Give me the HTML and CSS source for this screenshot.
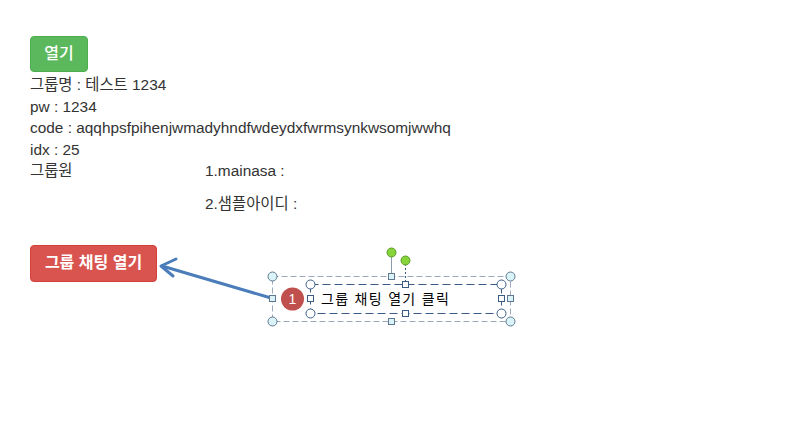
FILE: index.html
```html
<!DOCTYPE html>
<html lang="ko">
<head>
<meta charset="utf-8">
<link rel="stylesheet" href="styles.css">
</head>
<body>
<div class="page">
  <button class="btn btn-green">열기</button>
  <div class="info">
    <div>그룹명 : 테스트 1234</div>
    <div>pw : 1234</div>
    <div>code : aqqhpsfpihenjwmadyhndfwdeydxfwrmsynkwsomjwwhq</div>
    <div>idx : 25</div>
  </div>
  <div class="members">
    <div class="label">그룹원</div>
    <div class="list">
      <div class="member">1.mainasa :</div>
      <div class="member">2.샘플아이디 :</div>
    </div>
  </div>
  <button class="btn btn-red">그룹 채팅 열기</button>

  <svg class="overlay" width="797" height="429" viewBox="0 0 797 429">
    <g fill="none" stroke="#4a7dba" stroke-width="3" stroke-linecap="round" stroke-linejoin="round">
      <line x1="271" y1="298" x2="162" y2="266"/>
      <polyline points="176,259 161,266 173,276"/>
    </g>
    <g fill="none" stroke="#9aaabc" stroke-width="1" stroke-dasharray="6,3">
      <rect x="272.5" y="276.5" width="238" height="45"/>
    </g>
    <g fill="none" stroke="#3a5c85" stroke-width="1" stroke-dasharray="8,4">
      <rect x="310.5" y="284.5" width="191" height="29"/>
    </g>
    <g stroke="#8d9aa8" stroke-width="1">
      <line x1="391.5" y1="256" x2="391.5" y2="273"/>
    </g>
    <g stroke="#3a5c85" stroke-width="1" stroke-dasharray="2,2">
      <line x1="405.5" y1="264" x2="405.5" y2="281"/>
    </g>
    <g fill="#daf3f8" stroke="#60788f" stroke-width="1">
      <circle cx="272.5" cy="276.5" r="4.5"/>
      <circle cx="510.5" cy="276.5" r="4.5"/>
      <circle cx="272.5" cy="321.5" r="4.5"/>
      <circle cx="510.5" cy="321.5" r="4.5"/>
      <rect x="388.5" y="273.5" width="6" height="6"/>
      <rect x="388.5" y="318.5" width="6" height="6"/>
      <rect x="269.5" y="295.5" width="6" height="6"/>
      <rect x="507.5" y="295.5" width="6" height="6"/>
    </g>
    <g fill="#ffffff" stroke="#3a5c85" stroke-width="1">
      <circle cx="310.5" cy="284.5" r="4.5"/>
      <circle cx="501.5" cy="284.5" r="4.5"/>
      <circle cx="310.5" cy="313.5" r="4.5"/>
      <circle cx="501.5" cy="313.5" r="4.5"/>
      <rect x="402.5" y="281.5" width="6" height="6"/>
      <rect x="402.5" y="310.5" width="6" height="6"/>
      <rect x="307.5" y="295.5" width="6" height="6"/>
      <rect x="498.5" y="295.5" width="6" height="6"/>
    </g>
    <g fill="#86d43a" stroke="#5a9a2a" stroke-width="1">
      <circle cx="391.5" cy="252.5" r="4.5"/>
      <circle cx="405.5" cy="260.5" r="4.5"/>
    </g>
    <circle cx="292.5" cy="299" r="11.5" fill="#c0504d"/>
    <text x="292.5" y="304" class="num">1</text>
    <text x="321" y="304" class="note">그룹 채팅 열기 클릭</text>
  </svg>
</div>
</body>
</html>
```
FILE: styles.css
```css
html, body {
  margin: 0;
  padding: 0;
  background: #ffffff;
}
body {
  font-family: "Liberation Sans", Arial, "Noto Sans CJK KR", sans-serif;
  font-size: 15.4px;
  color: #333333;
}
.page {
  position: relative;
  width: 797px;
  height: 429px;
  padding: 36px 0 0 30px;
  box-sizing: border-box;
}
.btn {
  display: block;
  border: 1px solid transparent;
  border-radius: 4px;
  color: #ffffff;
  font-family: "Liberation Sans", Arial, "Noto Sans CJK KR", sans-serif;
  font-size: 16px;
  font-weight: 500;
  padding: 0;
  height: 36px;
  line-height: 34px;
  margin: 0;
  text-align: center;
}
.btn-green {
  background: #5cb85c;
  border-color: #4cae4c;
  width: 58px;
}
.btn-red {
  background: #d9534f;
  border-color: #d43f3a;
  width: 127px;
  height: 37px;
  margin-top: 30px;
  font-weight: 600;
}
.info {
  line-height: 21.5px;
  margin-top: 2px;
}
.members {
  display: flex;
  line-height: 21.5px;
}
.label {
  width: 175px;
}
.list {
  display: flex;
  flex-direction: column;
  gap: 11.5px;
}
.overlay {
  position: absolute;
  left: 0;
  top: 0;
  pointer-events: none;
}
.num {
  font-family: "Liberation Sans", Arial, sans-serif;
  font-size: 14px;
  fill: #ffffff;
  text-anchor: middle;
}
.note {
  font-family: "Noto Sans CJK KR", sans-serif;
  font-size: 14px;
  fill: #000000;
  letter-spacing: 1.3px;
}
```
